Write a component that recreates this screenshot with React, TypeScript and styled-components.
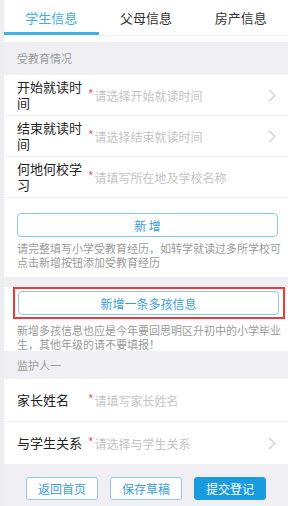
import { FC } from 'react'
import styled, { createGlobalStyle } from 'styled-components'

const GlobalStyle = createGlobalStyle`
  html, body {
    margin: 0;
    padding: 0;
    background: #ffffff;
  }
  body {
    font-family: "Noto Sans CJK SC", "Noto Sans", sans-serif;
  }
`

const Page = styled.div`
  width: 288px;
  height: 506px;
  box-sizing: border-box;
  border-left: 4px solid #eceef2;
  background: #ffffff;
  overflow: hidden;
`

const TabBar = styled.div`
  display: flex;
  height: 36px;
  box-sizing: border-box;
  border-bottom: 1px solid #f2f2f2;
  margin-bottom: 6px;
`

const Tab = styled.div<{ $active?: boolean }>`
  flex: 1;
  display: flex;
  align-items: center;
  justify-content: center;
  box-sizing: border-box;
  font-size: 13px;
  color: ${(p) => (p.$active ? '#3eaee6' : '#333333')};
  border-bottom: 3px solid ${(p) => (p.$active ? '#3eb2ea' : 'transparent')};
  padding-top: 2px;
`

const SectionTitle = styled.div<{ $h: number }>`
  height: ${(p) => p.$h}px;
  line-height: ${(p) => p.$h}px;
  background: #f0f0f4;
  padding-left: 13px;
  font-size: 11px;
  color: #9a9a9a;
`

const Row = styled.div<{ $h: number }>`
  display: flex;
  align-items: center;
  height: ${(p) => p.$h}px;
  box-sizing: border-box;
  padding: 0 12px 0 13px;
  border-bottom: 1px solid #efefef;
`

// labels carry their own line break, as the narrow column wraps them
const Label = styled.div`
  width: 66px;
  flex: none;
  font-size: 13px;
  line-height: 16px;
  color: #222222;
  white-space: pre-line;
`

const Star = styled.span`
  color: #f25555;
  font-size: 12px;
  margin: 0 1px 0 5px;
  position: relative;
  top: -2px;
`

const Placeholder = styled.div`
  flex: 1;
  font-size: 12px;
  color: #c4c4c4;
  white-space: nowrap;
`

const Chevron: FC = () => (
  <svg width="8" height="13" viewBox="0 0 8 13">
    <polyline points="1,1 7,6.5 1,12" fill="none" stroke="#cccccc" strokeWidth="1.1" />
  </svg>
)

const Block = styled.div<{ $top: number; $bottom: number }>`
  padding: ${(p) => p.$top}px 10px ${(p) => p.$bottom}px 13px;
`

const OutlineButton = styled.div`
  height: 24px;
  box-sizing: border-box;
  border: 1px solid #86ccef;
  border-radius: 4px;
  display: flex;
  align-items: center;
  justify-content: center;
  font-size: 12px;
  color: #3a9ed9;
  background: #ffffff;
`

const Highlight = styled.div`
  margin: 0 -7px 0 -4px;
  padding: 2px 4px 2px 3px;
  border: 2px solid #f03a3a;
`

const Hint = styled.div`
  margin: 4px -5px 0 0;
  font-size: 11px;
  line-height: 14px;
  color: #9a9a9a;
`

const Gap = styled.div`
  height: 10px;
  background: #f0f0f4;
`

const Footer = styled.div`
  height: 41px;
  background: #f0f0f4;
  display: flex;
  justify-content: center;
  align-items: flex-start;
  gap: 12px;
  padding-top: 12px;
  box-sizing: border-box;
`

const FooterButton = styled.div<{ $primary?: boolean }>`
  width: 72px;
  height: 23px;
  box-sizing: border-box;
  border-radius: 3px;
  display: flex;
  align-items: center;
  justify-content: center;
  font-size: 12px;
  border: 1px solid ${(p) => (p.$primary ? '#1a9be0' : '#8ccdee')};
  background: ${(p) => (p.$primary ? '#1a9be0' : '#ffffff')};
  color: ${(p) => (p.$primary ? '#ffffff' : '#3a9ed9')};
`

const fields = [
  { label: '开始就读时\n间', placeholder: '请选择开始就读时间', arrow: true },
  { label: '结束就读时\n间', placeholder: '请选择结束就读时间', arrow: true },
  { label: '何地何校学\n习', placeholder: '请填写所在地及学校名称', arrow: false },
]

const App: FC = () => (
  <>
    <GlobalStyle />
    <Page>
      <TabBar>
        <Tab $active>学生信息</Tab>
        <Tab>父母信息</Tab>
        <Tab>房产信息</Tab>
      </TabBar>

      <SectionTitle $h={33}>受教育情况</SectionTitle>
      {fields.map((f) => (
        <Row $h={41} key={f.label}>
          <Label>{f.label}</Label>
          <Star>*</Star>
          <Placeholder>{f.placeholder}</Placeholder>
          {f.arrow && <Chevron />}
        </Row>
      ))}

      <Block $top={15} $bottom={8}>
        <OutlineButton>新&nbsp;增</OutlineButton>
        <Hint>请完整填写小学受教育经历，如转学就读过多所学校可点击新增按钮添加受教育经历</Hint>
      </Block>
      <Gap />

      <Block $top={0} $bottom={0}>
        <Highlight>
          <OutlineButton>新增一条多孩信息</OutlineButton>
        </Highlight>
        <Hint>新增多孩信息也应是今年要回思明区升初中的小学毕业生，其他年级的请不要填报！</Hint>
      </Block>

      <SectionTitle $h={28}>监护人一</SectionTitle>
      <Row $h={43}>
        <Label>家长姓名</Label>
        <Star>*</Star>
        <Placeholder>请填写家长姓名</Placeholder>
      </Row>
      <Row $h={43}>
        <Label>与学生关系</Label>
        <Star>*</Star>
        <Placeholder>请选择与学生关系</Placeholder>
        <Chevron />
      </Row>

      <Footer>
        <FooterButton>返回首页</FooterButton>
        <FooterButton>保存草稿</FooterButton>
        <FooterButton $primary>提交登记</FooterButton>
      </Footer>
    </Page>
  </>
)

export default App
